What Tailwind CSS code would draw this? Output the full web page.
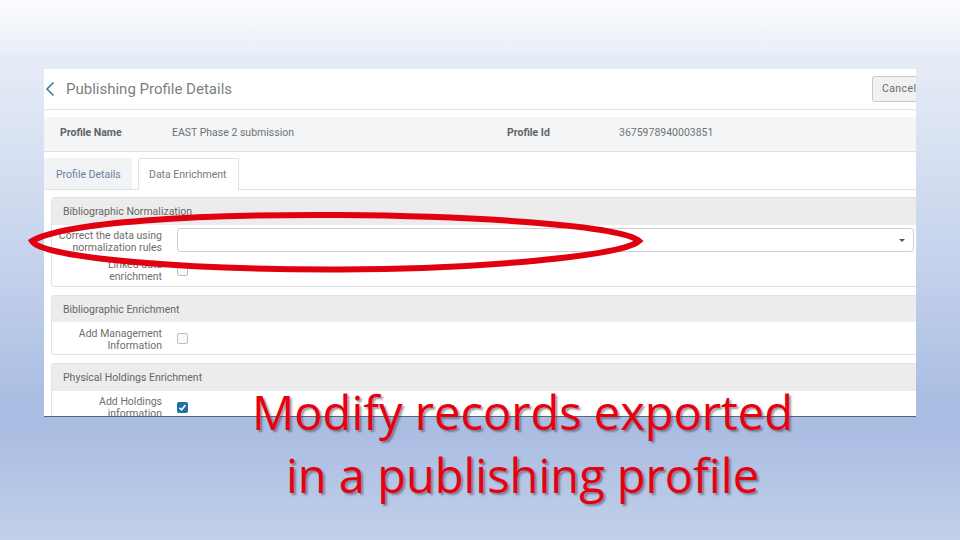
<!DOCTYPE html>
<html>
<head>
<meta charset="utf-8">
<script src="https://cdn.jsdelivr.net/npm/@tailwindcss/browser@4"></script>
</head>
<body class="m-0 overflow-hidden">
<div class="relative w-[960px] h-[540px] overflow-hidden font-['Roboto',sans-serif] bg-[linear-gradient(180deg,#fbfcfe_0%,#e6ecf6_11%,#cbd7ee_42%,#a9bde2_75%,#aabde2_80%,#c1d0ea_100%)]">

  <div class="absolute left-[44px] top-[69px] w-[872px] h-[348px] bg-white overflow-hidden border-b border-[#5a6678] flex flex-col">
    <div class="h-[41px] shrink-0 flex items-center border-b border-[#e2e4e6] relative">
      <svg class="ml-[1px] w-[10px] h-[16px]" viewBox="0 0 10 16" fill="none" stroke="#3f7aa6" stroke-width="1.6"><path d="M8.5 1.5 L2 8 L8.5 14.5"/></svg>
      <span class="ml-[11px] text-[15px] pt-[1px] text-[#7a7f83]">Publishing Profile Details</span>
      <div class="absolute left-[828px] top-[7px] w-[50px] h-[26px] bg-[#f1f1f1] border border-[#c8c8c8] rounded-[3px] pl-[9px] text-[10.5px] leading-[24px] tracking-[0.4px] text-[#6b6b6b]">Cancel</div>
    </div>
    <div class="mt-[7px] h-[35px] shrink-0 bg-[#f3f5f6] border-b border-[#dfe1e3] pb-[2px] flex items-center text-[10.5px]">
      <span class="ml-[16px] w-[112px] font-bold text-[#5f6468]">Profile Name</span>
      <span class="w-[335px] text-[#6e7276]">EAST Phase 2 submission</span>
      <span class="w-[112px] font-bold text-[#5f6468]">Profile Id</span>
      <span class="text-[#6e7276]">3675978940003851</span>
    </div>
    <div class="mt-[6px] h-[32px] shrink-0 flex items-end border-b border-[#dfe1e3]">
      <div class="w-[88px] h-[31px] bg-[#f2f3f4] text-[10.5px] leading-[33px] pl-[12px] text-[#6b7fa3]">Profile Details</div>
      <div class="ml-[6px] w-[101px] h-[32px] -mb-[1px] bg-white border border-b-0 border-[#dfe1e3] rounded-t-[2px] text-[10.5px] leading-[31px] pl-[10px] text-[#777]">Data Enrichment</div>
    </div>
    <div class="pl-[7px] pt-[7px] flex flex-col gap-[8px] w-[880px] shrink-0">
      <div class="h-[90px] border border-[#e2e2e2] rounded-[3px] overflow-hidden">
        <div class="h-[27px] bg-[#ececec] pl-[11px] text-[10.5px] leading-[27px] text-[#666]">Bibliographic Normalization</div>
        <div class="h-[30px] flex items-center">
          <div class="w-[110px] pt-[4px] text-right text-[10.5px] leading-[12px] text-[#6e6e6e]">Correct the data using normalization rules</div>
          <div class="ml-[15px] w-[737px] h-[24px] bg-white border border-[#cfcfcf] rounded-[3px] relative"><div class="absolute right-[8px] top-[10px] w-0 h-0 border-x-[3px] border-x-transparent border-t-[3px] border-t-[#555]"></div></div>
        </div>
        <div class="h-[31px] flex items-center">
          <div class="w-[110px] text-right text-[10.5px] leading-[12px] text-[#6e6e6e]">Linked data<br>enrichment</div>
          <div class="ml-[15px] w-[11px] h-[11px] border border-[#bdbdbd] rounded-[2px] bg-[#fafafa]"></div>
        </div>
      </div>
      <div class="h-[60px] border border-[#e2e2e2] rounded-[3px] overflow-hidden">
        <div class="h-[26px] bg-[#ececec] pl-[11px] text-[10.5px] leading-[28px] text-[#666]">Bibliographic Enrichment</div>
        <div class="h-[33px] flex items-center">
          <div class="w-[110px] pt-[2px] text-right text-[10.5px] leading-[12px] text-[#6e6e6e]">Add Management Information</div>
          <div class="ml-[15px] w-[11px] h-[11px] border border-[#bdbdbd] rounded-[2px] bg-[#fafafa]"></div>
        </div>
      </div>
      <div class="h-[80px] border border-[#e2e2e2] rounded-[3px] overflow-hidden">
        <div class="h-[27px] bg-[#ececec] pl-[11px] text-[10.5px] leading-[27px] text-[#666]">Physical Holdings Enrichment</div>
        <div class="h-[33px] flex items-center">
          <div class="w-[110px] text-right text-[10.5px] leading-[12px] text-[#6e6e6e]">Add Holdings information</div>
          <div class="ml-[15px] w-[11px] h-[11px] rounded-[2px] bg-[#1f6fa8] flex items-center justify-center">
            <svg class="w-[9px] h-[9px]" viewBox="0 0 9 9" fill="none" stroke="#fff" stroke-width="1.6"><path d="M1.5 4.8 L3.6 6.8 L7.5 2"/></svg>
          </div>
        </div>
      </div>
    </div>
  </div>

  <svg class="absolute left-0 top-0 w-[960px] h-[540px] pointer-events-none" viewBox="0 0 960 540" fill="none">
    <path d="M639 241 C 622 226, 480 216, 340 215 C 200 214, 64 222, 32 241 C 42 259, 200 270, 340 269.5 C 480 269, 622 256, 639 241 Z" stroke="#e0000f" stroke-width="6"/>
  </svg>

  <div class="absolute left-[130px] top-[381px] w-[785px] text-center font-['Open_Sans',sans-serif] text-[47px] leading-[63px] text-[#e60012] [text-shadow:2px_2px_2px_rgba(60,60,70,0.5)]">
    Modify records exported<br>in a publishing profile
  </div>
</div>
</body>
</html>
